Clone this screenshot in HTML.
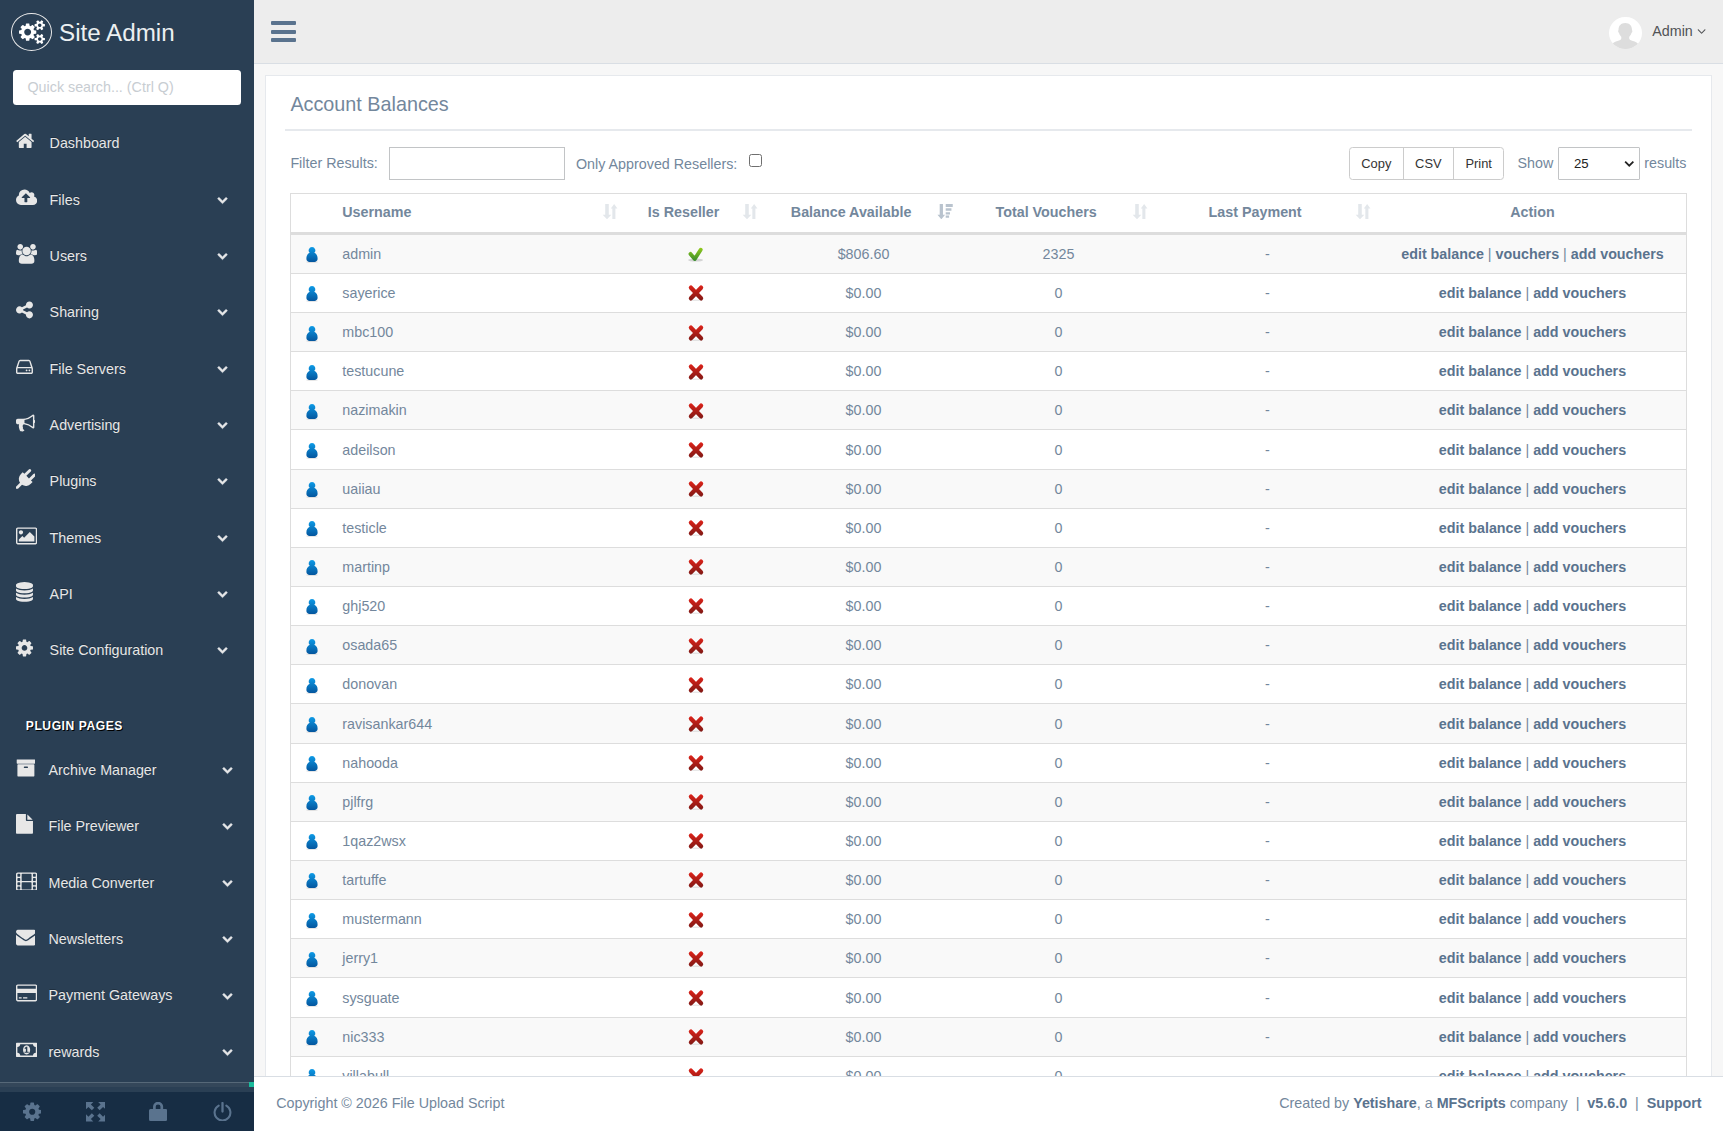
<!DOCTYPE html>
<html lang="en"><head><meta charset="utf-8"><title>Account Balances - Site Admin</title>
<style>
*{box-sizing:border-box}
html,body{margin:0;padding:0}
body{width:1723px;height:1131px;overflow:hidden;position:relative;background:#F7F7F7;color:#73879C;font-family:"Liberation Sans",Arial,Helvetica,sans-serif;font-size:14.3px;line-height:1.471}
a{color:#5A738E;text-decoration:none}
svg{display:block}
#side{position:absolute;left:0;top:0;width:254px;height:1131px;background:#2A3F54;overflow:hidden}
#logo{position:absolute;left:10.9px;top:12.8px;width:41.3px;height:38px;border:1.3px solid #EAEAEA;border-radius:50%}
#logo svg{position:absolute;left:6.7px;top:6.4px;fill:#fff}
#title{position:absolute;left:59px;top:15px;font-size:24.2px;line-height:36px;color:#ECF0F1;white-space:nowrap}
#qs{position:absolute;left:13px;top:70px;width:228px;height:35px;background:#fff;border-radius:3.5px;color:#C8CDD2;font-size:14.3px;line-height:35px;padding-left:14.5px}
.mi{position:absolute;left:0;width:254px;height:56.33px}
.mi svg{position:absolute;fill:#E7E7E7}
.mt{position:absolute;top:15.04px;line-height:20px;color:#E7E7E7;white-space:nowrap;text-shadow:0 -1px 0 rgba(0,0,0,.25)}
#pp{position:absolute;left:25.8px;top:717px;font-size:12.1px;font-weight:bold;letter-spacing:.55px;color:#fff;line-height:18px;text-shadow:1px 1px #000;white-space:nowrap}
#sband{position:absolute;left:0;top:1082px;width:254px;height:5px;background:#34475A;border-top:1px solid #566878}
#teal{position:absolute;left:249px;top:1082px;width:5px;height:5px;background:#1ABB9C}
#sfoot{position:absolute;left:0;top:1092px;width:254px;height:39px;background:#172D44}
#sfoot svg{position:absolute;fill:#5A738E}
#nav{position:absolute;left:254px;top:0;width:1469px;height:64px;background:#EDEDED;border-bottom:1px solid #D9DEE4}
#bars{position:absolute;left:16.6px;top:21px;width:25.2px;height:21px}
#bars i{position:absolute;left:0;width:25px;height:4.1px;border-radius:1px;background:#5A738E}
#av{position:absolute;left:1355px;top:16.7px;width:32.5px;height:32.5px;border-radius:50%;background:#fff;overflow:hidden}
#adm{position:absolute;left:1398.3px;top:21px;line-height:20px;color:#515356;white-space:nowrap}
#panel{position:absolute;left:265px;top:75px;width:1447px;height:1010px;background:#fff;border:1px solid #E6E9ED}
#h2{position:absolute;left:24.4px;top:12.5px;font-size:19.8px;line-height:30px;color:#73879C;white-space:nowrap}
#hr{position:absolute;left:19px;top:53px;width:1407px;height:2px;background:#E6E9ED}
.lbl{position:absolute;line-height:20px;white-space:nowrap}
.inp{position:absolute;background:#fff;border:1px solid #C2C4C6}
#btns{position:absolute;left:1083px;top:71px;height:33px;display:flex;border:1px solid #ccc;border-radius:3.5px;background:#fff;font-size:12.9px;color:#333;line-height:31px}
#btns span{display:block;text-align:center;border-left:1px solid #ccc}
#btns span:first-child{border-left:0}
table{position:absolute;left:24px;top:117px;width:1397px;border-collapse:collapse;border:1px solid #ddd;table-layout:fixed}
th{height:40px;padding:0;font-weight:bold;text-align:center;position:relative;border-bottom:3px solid #ddd;vertical-align:middle;line-height:20px;white-space:nowrap}
th.l{text-align:left;padding-left:8.8px}
th span{display:block;padding-right:24.8px;position:relative;top:-1px}
th.na span{padding-right:0}
.srt{position:absolute;right:8px;top:9.8px;width:15.6px;height:15.3px}
td{height:39.155px;padding:0;text-align:center;border-top:1px solid #ddd;vertical-align:middle;line-height:20px;white-space:nowrap}
td.c1{text-align:left;padding-left:8.8px}
tr.odd td{background:#F9F9F9}
tr.first td{height:39.91px}
td a{font-weight:bold}
.uic{width:18px;height:18px;margin:0 auto;position:relative;left:-.1px;top:.4px}
.xic{width:18px;height:18px;margin:0 auto;position:relative;left:-.45px;top:.4px}
.cic{width:18px;height:18px;margin:0 auto;position:relative;left:-.45px;top:.3px}
#foot{position:absolute;left:254px;top:1076px;width:1469px;height:55px;background:#fff;border-top:1px solid #D9DEE4}
#foot .l{position:absolute;left:22.2px;top:15.5px;line-height:20px;white-space:nowrap}
#foot .r{position:absolute;right:21.5px;top:15.500px;line-height:20px;white-space:nowrap}
#foot b{color:#5A738E}
</style></head><body>
<svg width="0" height="0" style="position:absolute"><defs><linearGradient id="ug" x1="0" y1="0" x2="0" y2="1"><stop offset="0" stop-color="#0D9AE6"/><stop offset="1" stop-color="#04569E"/></linearGradient><linearGradient id="xg" gradientUnits="userSpaceOnUse" x1="0" y1="1.500" x2="0" y2="16.500"><stop offset="0" stop-color="#DC2219"/><stop offset="1" stop-color="#801915"/></linearGradient><linearGradient id="cg" gradientUnits="userSpaceOnUse" x1="0" y1="2.500" x2="0" y2="16"><stop offset="0" stop-color="#96CC1C"/><stop offset="1" stop-color="#358A2C"/></linearGradient></defs></svg>
<div id="side">
<div id="logo"><svg class="fa" viewBox="0 -1536 1920 1792" style="width:25.93px;height:24.20px;"><path transform="scale(1,-1)" d="M896 640q0 106 -75 181t-181 75t-181 -75t-75 -181t75 -181t181 -75t181 75t75 181zM1664 128q0 52 -38 90t-90 38t-90 -38t-38 -90q0 -53 37.5 -90.5t90.5 -37.5t90.5 37.5t37.5 90.5zM1664 1152q0 52 -38 90t-90 38t-90 -38t-38 -90q0 -53 37.5 -90.5t90.5 -37.5
t90.5 37.5t37.5 90.5zM1280 731v-185q0 -10 -7 -19.5t-16 -10.5l-155 -24q-11 -35 -32 -76q34 -48 90 -115q7 -11 7 -20q0 -12 -7 -19q-23 -30 -82.5 -89.5t-78.5 -59.5q-11 0 -21 7l-115 90q-37 -19 -77 -31q-11 -108 -23 -155q-7 -24 -30 -24h-186q-11 0 -20 7.5t-10 17.5
l-23 153q-34 10 -75 31l-118 -89q-7 -7 -20 -7q-11 0 -21 8q-144 133 -144 160q0 9 7 19q10 14 41 53t47 61q-23 44 -35 82l-152 24q-10 1 -17 9.5t-7 19.5v185q0 10 7 19.5t16 10.5l155 24q11 35 32 76q-34 48 -90 115q-7 11 -7 20q0 12 7 20q22 30 82 89t79 59q11 0 21 -7
l115 -90q34 18 77 32q11 108 23 154q7 24 30 24h186q11 0 20 -7.5t10 -17.5l23 -153q34 -10 75 -31l118 89q8 7 20 7q11 0 21 -8q144 -133 144 -160q0 -8 -7 -19q-12 -16 -42 -54t-45 -60q23 -48 34 -82l152 -23q10 -2 17 -10.5t7 -19.5zM1920 198v-140q0 -16 -149 -31
q-12 -27 -30 -52q51 -113 51 -138q0 -4 -4 -7q-122 -71 -124 -71q-8 0 -46 47t-52 68q-20 -2 -30 -2t-30 2q-14 -21 -52 -68t-46 -47q-2 0 -124 71q-4 3 -4 7q0 25 51 138q-18 25 -30 52q-149 15 -149 31v140q0 16 149 31q13 29 30 52q-51 113 -51 138q0 4 4 7q4 2 35 20
t59 34t30 16q8 0 46 -46.5t52 -67.5q20 2 30 2t30 -2q51 71 92 112l6 2q4 0 124 -70q4 -3 4 -7q0 -25 -51 -138q17 -23 30 -52q149 -15 149 -31zM1920 1222v-140q0 -16 -149 -31q-12 -27 -30 -52q51 -113 51 -138q0 -4 -4 -7q-122 -71 -124 -71q-8 0 -46 47t-52 68
q-20 -2 -30 -2t-30 2q-14 -21 -52 -68t-46 -47q-2 0 -124 71q-4 3 -4 7q0 25 51 138q-18 25 -30 52q-149 15 -149 31v140q0 16 149 31q13 29 30 52q-51 113 -51 138q0 4 4 7q4 2 35 20t59 34t30 16q8 0 46 -46.5t52 -67.5q20 2 30 2t30 -2q51 71 92 112l6 2q4 0 124 -70
q4 -3 4 -7q0 -25 -51 -138q17 -23 30 -52q149 -15 149 -31z"/></svg></div>
<div id="title">Site Admin</div>
<div id="qs">Quick search... (Ctrl Q)</div>
<div class="mi" style="top:118.20px"><svg class="fa" viewBox="0 -1536 1664 1792" style="width:18.39px;height:19.80px;left:15.7px;top:13.03px"><path transform="scale(1,-1)" d="M1408 544v-480q0 -26 -19 -45t-45 -19h-384v384h-256v-384h-384q-26 0 -45 19t-19 45v480q0 1 0.5 3t0.5 3l575 474l575 -474q1 -2 1 -6zM1631 613l-62 -74q-8 -9 -21 -11h-3q-13 0 -21 7l-692 577l-692 -577q-12 -8 -24 -7q-13 2 -21 11l-62 74q-8 10 -7 23.5t11 21.5
l719 599q32 26 76 26t76 -26l244 -204v195q0 14 9 23t23 9h192q14 0 23 -9t9 -23v-408l219 -182q10 -8 11 -21.5t-7 -23.5z"/></svg><span class="mt" style="left:49.6px">Dashboard</span></div>
<div class="mi" style="top:174.53px"><svg class="fa" viewBox="0 -1536 1920 1792" style="width:21.21px;height:19.80px;left:15.7px;top:13.03px"><path transform="scale(1,-1)" d="M1280 672q0 14 -9 23l-352 352q-9 9 -23 9t-23 -9l-351 -351q-10 -12 -10 -24q0 -14 9 -23t23 -9h224v-352q0 -13 9.5 -22.5t22.5 -9.5h192q13 0 22.5 9.5t9.5 22.5v352h224q13 0 22.5 9.5t9.5 22.5zM1920 384q0 -159 -112.5 -271.5t-271.5 -112.5h-1088
q-185 0 -316.5 131.5t-131.5 316.5q0 130 70 240t188 165q-2 30 -2 43q0 212 150 362t362 150q156 0 285.5 -87t188.5 -231q71 62 166 62q106 0 181 -75t75 -181q0 -76 -41 -138q130 -31 213.5 -135.5t83.5 -238.5z"/></svg><span class="mt" style="left:49.6px">Files</span><svg class="fa" viewBox="0 -1536 1792 1792" style="width:11.00px;height:11.00px;left:217px;top:19.2px" fill="#C4CFDA" stroke="#C4CFDA" stroke-width="70"><path transform="scale(1,-1)" d="M1683 728l-742 -741q-19 -19 -45 -19t-45 19l-742 741q-19 19 -19 45.5t19 45.5l166 165q19 19 45 19t45 -19l531 -531l531 531q19 19 45 19t45 -19l166 -165q19 -19 19 -45.5t-19 -45.5z"/></svg></div>
<div class="mi" style="top:230.86px"><svg class="fa" viewBox="0 -1536 1920 1792" style="width:21.21px;height:19.80px;left:15.7px;top:13.03px"><path transform="scale(1,-1)" d="M593 640q-162 -5 -265 -128h-134q-82 0 -138 40.5t-56 118.5q0 353 124 353q6 0 43.5 -21t97.5 -42.5t119 -21.5q67 0 133 23q-5 -37 -5 -66q0 -139 81 -256zM1664 3q0 -120 -73 -189.5t-194 -69.5h-874q-121 0 -194 69.5t-73 189.5q0 53 3.5 103.5t14 109t26.5 108.5
t43 97.5t62 81t85.5 53.5t111.5 20q10 0 43 -21.5t73 -48t107 -48t135 -21.5t135 21.5t107 48t73 48t43 21.5q61 0 111.5 -20t85.5 -53.5t62 -81t43 -97.5t26.5 -108.5t14 -109t3.5 -103.5zM640 1280q0 -106 -75 -181t-181 -75t-181 75t-75 181t75 181t181 75t181 -75
t75 -181zM1344 896q0 -159 -112.5 -271.5t-271.5 -112.5t-271.5 112.5t-112.5 271.5t112.5 271.5t271.5 112.5t271.5 -112.5t112.5 -271.5zM1920 671q0 -78 -56 -118.5t-138 -40.5h-134q-103 123 -265 128q81 117 81 256q0 29 -5 66q66 -23 133 -23q59 0 119 21.5t97.5 42.5
t43.5 21q124 0 124 -353zM1792 1280q0 -106 -75 -181t-181 -75t-181 75t-75 181t75 181t181 75t181 -75t75 -181z"/></svg><span class="mt" style="left:49.6px">Users</span><svg class="fa" viewBox="0 -1536 1792 1792" style="width:11.00px;height:11.00px;left:217px;top:19.2px" fill="#C4CFDA" stroke="#C4CFDA" stroke-width="70"><path transform="scale(1,-1)" d="M1683 728l-742 -741q-19 -19 -45 -19t-45 19l-742 741q-19 19 -19 45.5t19 45.5l166 165q19 19 45 19t45 -19l531 -531l531 531q19 19 45 19t45 -19l166 -165q19 -19 19 -45.5t-19 -45.5z"/></svg></div>
<div class="mi" style="top:287.19px"><svg class="fa" viewBox="0 -1536 1536 1792" style="width:16.97px;height:19.80px;left:15.7px;top:13.03px"><path transform="scale(1,-1)" d="M1216 512q133 0 226.5 -93.5t93.5 -226.5t-93.5 -226.5t-226.5 -93.5t-226.5 93.5t-93.5 226.5q0 12 2 34l-360 180q-92 -86 -218 -86q-133 0 -226.5 93.5t-93.5 226.5t93.5 226.5t226.5 93.5q126 0 218 -86l360 180q-2 22 -2 34q0 133 93.5 226.5t226.5 93.5
t226.5 -93.5t93.5 -226.5t-93.5 -226.5t-226.5 -93.5q-126 0 -218 86l-360 -180q2 -22 2 -34t-2 -34l360 -180q92 86 218 86z"/></svg><span class="mt" style="left:49.6px">Sharing</span><svg class="fa" viewBox="0 -1536 1792 1792" style="width:11.00px;height:11.00px;left:217px;top:19.2px" fill="#C4CFDA" stroke="#C4CFDA" stroke-width="70"><path transform="scale(1,-1)" d="M1683 728l-742 -741q-19 -19 -45 -19t-45 19l-742 741q-19 19 -19 45.5t19 45.5l166 165q19 19 45 19t45 -19l531 -531l531 531q19 19 45 19t45 -19l166 -165q19 -19 19 -45.5t-19 -45.5z"/></svg></div>
<div class="mi" style="top:343.52px"><svg class="fa" viewBox="0 -1536 1536 1792" style="width:16.97px;height:19.80px;left:15.7px;top:13.03px"><path transform="scale(1,-1)" d="M1040 320q0 -33 -23.5 -56.5t-56.5 -23.5t-56.5 23.5t-23.5 56.5t23.5 56.5t56.5 23.5t56.5 -23.5t23.5 -56.5zM1296 320q0 -33 -23.5 -56.5t-56.5 -23.5t-56.5 23.5t-23.5 56.5t23.5 56.5t56.5 23.5t56.5 -23.5t23.5 -56.5zM1408 160v320q0 13 -9.5 22.5t-22.5 9.5
h-1216q-13 0 -22.5 -9.5t-9.5 -22.5v-320q0 -13 9.5 -22.5t22.5 -9.5h1216q13 0 22.5 9.5t9.5 22.5zM178 640h1180l-157 482q-4 13 -16 21.5t-26 8.5h-782q-14 0 -26 -8.5t-16 -21.5zM1536 480v-320q0 -66 -47 -113t-113 -47h-1216q-66 0 -113 47t-47 113v320q0 25 16 75
l197 606q17 53 63 86t101 33h782q55 0 101 -33t63 -86l197 -606q16 -50 16 -75z"/></svg><span class="mt" style="left:49.6px">File Servers</span><svg class="fa" viewBox="0 -1536 1792 1792" style="width:11.00px;height:11.00px;left:217px;top:19.2px" fill="#C4CFDA" stroke="#C4CFDA" stroke-width="70"><path transform="scale(1,-1)" d="M1683 728l-742 -741q-19 -19 -45 -19t-45 19l-742 741q-19 19 -19 45.5t19 45.5l166 165q19 19 45 19t45 -19l531 -531l531 531q19 19 45 19t45 -19l166 -165q19 -19 19 -45.5t-19 -45.5z"/></svg></div>
<div class="mi" style="top:399.85px"><svg class="fa" viewBox="0 -1536 1792 1792" style="width:19.80px;height:19.80px;left:15.7px;top:13.03px"><path transform="scale(1,-1)" d="M1664 896q53 0 90.5 -37.5t37.5 -90.5t-37.5 -90.5t-90.5 -37.5v-384q0 -52 -38 -90t-90 -38q-417 347 -812 380q-58 -19 -91 -66t-31 -100.5t40 -92.5q-20 -33 -23 -65.5t6 -58t33.5 -55t48 -50t61.5 -50.5q-29 -58 -111.5 -83t-168.5 -11.5t-132 55.5q-7 23 -29.5 87.5
t-32 94.5t-23 89t-15 101t3.5 98.5t22 110.5h-122q-66 0 -113 47t-47 113v192q0 66 47 113t113 47h480q435 0 896 384q52 0 90 -38t38 -90v-384zM1536 292v954q-394 -302 -768 -343v-270q377 -42 768 -341z"/></svg><span class="mt" style="left:49.6px">Advertising</span><svg class="fa" viewBox="0 -1536 1792 1792" style="width:11.00px;height:11.00px;left:217px;top:19.2px" fill="#C4CFDA" stroke="#C4CFDA" stroke-width="70"><path transform="scale(1,-1)" d="M1683 728l-742 -741q-19 -19 -45 -19t-45 19l-742 741q-19 19 -19 45.5t19 45.5l166 165q19 19 45 19t45 -19l531 -531l531 531q19 19 45 19t45 -19l166 -165q19 -19 19 -45.5t-19 -45.5z"/></svg></div>
<div class="mi" style="top:456.18px"><svg class="fa" viewBox="0 -1536 1792 1792" style="width:19.80px;height:19.80px;left:15.7px;top:13.03px"><path transform="scale(1,-1)" d="M1755 1083q37 -38 37 -90.5t-37 -90.5l-401 -400l150 -150l-160 -160q-163 -163 -389.5 -186.5t-411.5 100.5l-362 -362h-181v181l362 362q-124 185 -100.5 411.5t186.5 389.5l160 160l150 -150l400 401q38 37 91 37t90 -37t37 -90.5t-37 -90.5l-400 -401l234 -234
l401 400q38 37 91 37t90 -37z"/></svg><span class="mt" style="left:49.6px">Plugins</span><svg class="fa" viewBox="0 -1536 1792 1792" style="width:11.00px;height:11.00px;left:217px;top:19.2px" fill="#C4CFDA" stroke="#C4CFDA" stroke-width="70"><path transform="scale(1,-1)" d="M1683 728l-742 -741q-19 -19 -45 -19t-45 19l-742 741q-19 19 -19 45.5t19 45.5l166 165q19 19 45 19t45 -19l531 -531l531 531q19 19 45 19t45 -19l166 -165q19 -19 19 -45.5t-19 -45.5z"/></svg></div>
<div class="mi" style="top:512.51px"><svg class="fa" viewBox="0 -1536 1920 1792" style="width:21.21px;height:19.80px;left:15.7px;top:13.03px"><path transform="scale(1,-1)" d="M640 960q0 -80 -56 -136t-136 -56t-136 56t-56 136t56 136t136 56t136 -56t56 -136zM1664 576v-448h-1408v192l320 320l160 -160l512 512zM1760 1280h-1600q-13 0 -22.5 -9.5t-9.5 -22.5v-1216q0 -13 9.5 -22.5t22.5 -9.5h1600q13 0 22.5 9.5t9.5 22.5v1216
q0 13 -9.5 22.5t-22.5 9.5zM1920 1248v-1216q0 -66 -47 -113t-113 -47h-1600q-66 0 -113 47t-47 113v1216q0 66 47 113t113 47h1600q66 0 113 -47t47 -113z"/></svg><span class="mt" style="left:49.6px">Themes</span><svg class="fa" viewBox="0 -1536 1792 1792" style="width:11.00px;height:11.00px;left:217px;top:19.2px" fill="#C4CFDA" stroke="#C4CFDA" stroke-width="70"><path transform="scale(1,-1)" d="M1683 728l-742 -741q-19 -19 -45 -19t-45 19l-742 741q-19 19 -19 45.5t19 45.5l166 165q19 19 45 19t45 -19l531 -531l531 531q19 19 45 19t45 -19l166 -165q19 -19 19 -45.5t-19 -45.5z"/></svg></div>
<div class="mi" style="top:568.84px"><svg class="fa" viewBox="0 -1536 1536 1792" style="width:16.97px;height:19.80px;left:15.7px;top:13.03px"><path transform="scale(1,-1)" d="M768 768q237 0 443 43t325 127v-170q0 -69 -103 -128t-280 -93.5t-385 -34.5t-385 34.5t-280 93.5t-103 128v170q119 -84 325 -127t443 -43zM768 0q237 0 443 43t325 127v-170q0 -69 -103 -128t-280 -93.5t-385 -34.5t-385 34.5t-280 93.5t-103 128v170q119 -84 325 -127
t443 -43zM768 384q237 0 443 43t325 127v-170q0 -69 -103 -128t-280 -93.5t-385 -34.5t-385 34.5t-280 93.5t-103 128v170q119 -84 325 -127t443 -43zM768 1536q208 0 385 -34.5t280 -93.5t103 -128v-128q0 -69 -103 -128t-280 -93.5t-385 -34.5t-385 34.5t-280 93.5
t-103 128v128q0 69 103 128t280 93.5t385 34.5z"/></svg><span class="mt" style="left:49.6px">API</span><svg class="fa" viewBox="0 -1536 1792 1792" style="width:11.00px;height:11.00px;left:217px;top:19.2px" fill="#C4CFDA" stroke="#C4CFDA" stroke-width="70"><path transform="scale(1,-1)" d="M1683 728l-742 -741q-19 -19 -45 -19t-45 19l-742 741q-19 19 -19 45.5t19 45.5l166 165q19 19 45 19t45 -19l531 -531l531 531q19 19 45 19t45 -19l166 -165q19 -19 19 -45.5t-19 -45.5z"/></svg></div>
<div class="mi" style="top:625.17px"><svg class="fa" viewBox="0 -1536 1536 1792" style="width:16.97px;height:19.80px;left:15.7px;top:13.03px"><path transform="scale(1,-1)" d="M1024 640q0 106 -75 181t-181 75t-181 -75t-75 -181t75 -181t181 -75t181 75t75 181zM1536 749v-222q0 -12 -8 -23t-20 -13l-185 -28q-19 -54 -39 -91q35 -50 107 -138q10 -12 10 -25t-9 -23q-27 -37 -99 -108t-94 -71q-12 0 -26 9l-138 108q-44 -23 -91 -38
q-16 -136 -29 -186q-7 -28 -36 -28h-222q-14 0 -24.5 8.5t-11.5 21.5l-28 184q-49 16 -90 37l-141 -107q-10 -9 -25 -9q-14 0 -25 11q-126 114 -165 168q-7 10 -7 23q0 12 8 23q15 21 51 66.5t54 70.5q-27 50 -41 99l-183 27q-13 2 -21 12.5t-8 23.5v222q0 12 8 23t19 13
l186 28q14 46 39 92q-40 57 -107 138q-10 12 -10 24q0 10 9 23q26 36 98.5 107.5t94.5 71.5q13 0 26 -10l138 -107q44 23 91 38q16 136 29 186q7 28 36 28h222q14 0 24.5 -8.5t11.5 -21.5l28 -184q49 -16 90 -37l142 107q9 9 24 9q13 0 25 -10q129 -119 165 -170q7 -8 7 -22
q0 -12 -8 -23q-15 -21 -51 -66.5t-54 -70.5q26 -50 41 -98l183 -28q13 -2 21 -12.5t8 -23.5z"/></svg><span class="mt" style="left:49.6px">Site Configuration</span><svg class="fa" viewBox="0 -1536 1792 1792" style="width:11.00px;height:11.00px;left:217px;top:19.2px" fill="#C4CFDA" stroke="#C4CFDA" stroke-width="70"><path transform="scale(1,-1)" d="M1683 728l-742 -741q-19 -19 -45 -19t-45 19l-742 741q-19 19 -19 45.5t19 45.5l166 165q19 19 45 19t45 -19l531 -531l531 531q19 19 45 19t45 -19l166 -165q19 -19 19 -45.5t-19 -45.5z"/></svg></div>
<div class="mi" style="top:744.90px"><svg class="fa" viewBox="0 -1536 1792 1792" style="width:19.80px;height:19.80px;left:15.7px;top:13.03px"><path transform="scale(1,-1)" d="M1088 704q0 26 -19 45t-45 19h-256q-26 0 -45 -19t-19 -45t19 -45t45 -19h256q26 0 45 19t19 45zM1664 896v-960q0 -26 -19 -45t-45 -19h-1408q-26 0 -45 19t-19 45v960q0 26 19 45t45 19h1408q26 0 45 -19t19 -45zM1728 1344v-256q0 -26 -19 -45t-45 -19h-1536
q-26 0 -45 19t-19 45v256q0 26 19 45t45 19h1536q26 0 45 -19t19 -45z"/></svg><span class="mt" style="left:48.5px">Archive Manager</span><svg class="fa" viewBox="0 -1536 1792 1792" style="width:11.00px;height:11.00px;left:221.7px;top:19.2px" fill="#C4CFDA" stroke="#C4CFDA" stroke-width="70"><path transform="scale(1,-1)" d="M1683 728l-742 -741q-19 -19 -45 -19t-45 19l-742 741q-19 19 -19 45.5t19 45.5l166 165q19 19 45 19t45 -19l531 -531l531 531q19 19 45 19t45 -19l166 -165q19 -19 19 -45.5t-19 -45.5z"/></svg></div>
<div class="mi" style="top:801.26px"><svg class="fa" viewBox="0 -1536 1536 1792" style="width:16.97px;height:19.80px;left:15.7px;top:13.03px"><path transform="scale(1,-1)" d="M1024 1024v472q22 -14 36 -28l408 -408q14 -14 28 -36h-472zM896 992q0 -40 28 -68t68 -28h544v-1056q0 -40 -28 -68t-68 -28h-1344q-40 0 -68 28t-28 68v1600q0 40 28 68t68 28h800v-544z"/></svg><span class="mt" style="left:48.5px">File Previewer</span><svg class="fa" viewBox="0 -1536 1792 1792" style="width:11.00px;height:11.00px;left:221.7px;top:19.2px" fill="#C4CFDA" stroke="#C4CFDA" stroke-width="70"><path transform="scale(1,-1)" d="M1683 728l-742 -741q-19 -19 -45 -19t-45 19l-742 741q-19 19 -19 45.5t19 45.5l166 165q19 19 45 19t45 -19l531 -531l531 531q19 19 45 19t45 -19l166 -165q19 -19 19 -45.5t-19 -45.5z"/></svg></div>
<div class="mi" style="top:857.62px"><svg class="fa" viewBox="0 -1536 1920 1792" style="width:21.21px;height:19.80px;left:15.7px;top:13.03px"><path transform="scale(1,-1)" d="M384 -64v128q0 26 -19 45t-45 19h-128q-26 0 -45 -19t-19 -45v-128q0 -26 19 -45t45 -19h128q26 0 45 19t19 45zM384 320v128q0 26 -19 45t-45 19h-128q-26 0 -45 -19t-19 -45v-128q0 -26 19 -45t45 -19h128q26 0 45 19t19 45zM384 704v128q0 26 -19 45t-45 19h-128
q-26 0 -45 -19t-19 -45v-128q0 -26 19 -45t45 -19h128q26 0 45 19t19 45zM1408 -64v512q0 26 -19 45t-45 19h-768q-26 0 -45 -19t-19 -45v-512q0 -26 19 -45t45 -19h768q26 0 45 19t19 45zM384 1088v128q0 26 -19 45t-45 19h-128q-26 0 -45 -19t-19 -45v-128q0 -26 19 -45
t45 -19h128q26 0 45 19t19 45zM1792 -64v128q0 26 -19 45t-45 19h-128q-26 0 -45 -19t-19 -45v-128q0 -26 19 -45t45 -19h128q26 0 45 19t19 45zM1408 704v512q0 26 -19 45t-45 19h-768q-26 0 -45 -19t-19 -45v-512q0 -26 19 -45t45 -19h768q26 0 45 19t19 45zM1792 320v128
q0 26 -19 45t-45 19h-128q-26 0 -45 -19t-19 -45v-128q0 -26 19 -45t45 -19h128q26 0 45 19t19 45zM1792 704v128q0 26 -19 45t-45 19h-128q-26 0 -45 -19t-19 -45v-128q0 -26 19 -45t45 -19h128q26 0 45 19t19 45zM1792 1088v128q0 26 -19 45t-45 19h-128q-26 0 -45 -19
t-19 -45v-128q0 -26 19 -45t45 -19h128q26 0 45 19t19 45zM1920 1248v-1344q0 -66 -47 -113t-113 -47h-1600q-66 0 -113 47t-47 113v1344q0 66 47 113t113 47h1600q66 0 113 -47t47 -113z"/></svg><span class="mt" style="left:48.5px">Media Converter</span><svg class="fa" viewBox="0 -1536 1792 1792" style="width:11.00px;height:11.00px;left:221.7px;top:19.2px" fill="#C4CFDA" stroke="#C4CFDA" stroke-width="70"><path transform="scale(1,-1)" d="M1683 728l-742 -741q-19 -19 -45 -19t-45 19l-742 741q-19 19 -19 45.5t19 45.5l166 165q19 19 45 19t45 -19l531 -531l531 531q19 19 45 19t45 -19l166 -165q19 -19 19 -45.5t-19 -45.5z"/></svg></div>
<div class="mi" style="top:913.98px"><svg class="fa" viewBox="0 -1536 1792 1792" style="width:19.80px;height:19.80px;left:15.7px;top:13.03px"><path transform="scale(1,-1)" d="M1792 826v-794q0 -66 -47 -113t-113 -47h-1472q-66 0 -113 47t-47 113v794q44 -49 101 -87q362 -246 497 -345q57 -42 92.5 -65.5t94.5 -48t110 -24.5h1h1q51 0 110 24.5t94.5 48t92.5 65.5q170 123 498 345q57 39 100 87zM1792 1120q0 -79 -49 -151t-122 -123
q-376 -261 -468 -325q-10 -7 -42.5 -30.5t-54 -38t-52 -32.5t-57.5 -27t-50 -9h-1h-1q-23 0 -50 9t-57.5 27t-52 32.5t-54 38t-42.5 30.5q-91 64 -262 182.5t-205 142.5q-62 42 -117 115.5t-55 136.5q0 78 41.5 130t118.5 52h1472q65 0 112.5 -47t47.5 -113z"/></svg><span class="mt" style="left:48.5px">Newsletters</span><svg class="fa" viewBox="0 -1536 1792 1792" style="width:11.00px;height:11.00px;left:221.7px;top:19.2px" fill="#C4CFDA" stroke="#C4CFDA" stroke-width="70"><path transform="scale(1,-1)" d="M1683 728l-742 -741q-19 -19 -45 -19t-45 19l-742 741q-19 19 -19 45.5t19 45.5l166 165q19 19 45 19t45 -19l531 -531l531 531q19 19 45 19t45 -19l166 -165q19 -19 19 -45.5t-19 -45.5z"/></svg></div>
<div class="mi" style="top:970.34px"><svg class="fa" viewBox="0 -1536 1920 1792" style="width:21.21px;height:19.80px;left:15.7px;top:13.03px"><path transform="scale(1,-1)" d="M1760 1408q66 0 113 -47t47 -113v-1216q0 -66 -47 -113t-113 -47h-1600q-66 0 -113 47t-47 113v1216q0 66 47 113t113 47h1600zM160 1280q-13 0 -22.5 -9.5t-9.5 -22.5v-224h1664v224q0 13 -9.5 22.5t-22.5 9.5h-1600zM1760 0q13 0 22.5 9.5t9.5 22.5v608h-1664v-608
q0 -13 9.5 -22.5t22.5 -9.5h1600zM256 128v128h256v-128h-256zM640 128v128h384v-128h-384z"/></svg><span class="mt" style="left:48.5px">Payment Gateways</span><svg class="fa" viewBox="0 -1536 1792 1792" style="width:11.00px;height:11.00px;left:221.7px;top:19.2px" fill="#C4CFDA" stroke="#C4CFDA" stroke-width="70"><path transform="scale(1,-1)" d="M1683 728l-742 -741q-19 -19 -45 -19t-45 19l-742 741q-19 19 -19 45.5t19 45.5l166 165q19 19 45 19t45 -19l531 -531l531 531q19 19 45 19t45 -19l166 -165q19 -19 19 -45.5t-19 -45.5z"/></svg></div>
<div class="mi" style="top:1026.70px"><svg class="fa" viewBox="0 -1536 1920 1792" style="width:21.21px;height:19.80px;left:15.7px;top:13.03px"><path transform="scale(1,-1)" d="M768 384h384v96h-128v448h-114l-148 -137l77 -80q42 37 55 57h2v-288h-128v-96zM1280 640q0 -70 -21 -142t-59.5 -134t-101.5 -101t-138 -39t-138 39t-101.5 101t-59.5 134t-21 142t21 142t59.5 134t101.5 101t138 39t138 -39t101.5 -101t59.5 -134t21 -142zM1792 384
v512q-106 0 -181 75t-75 181h-1152q0 -106 -75 -181t-181 -75v-512q106 0 181 -75t75 -181h1152q0 106 75 181t181 75zM1920 1216v-1152q0 -26 -19 -45t-45 -19h-1792q-26 0 -45 19t-19 45v1152q0 26 19 45t45 19h1792q26 0 45 -19t19 -45z"/></svg><span class="mt" style="left:48.5px">rewards</span><svg class="fa" viewBox="0 -1536 1792 1792" style="width:11.00px;height:11.00px;left:221.7px;top:19.2px" fill="#C4CFDA" stroke="#C4CFDA" stroke-width="70"><path transform="scale(1,-1)" d="M1683 728l-742 -741q-19 -19 -45 -19t-45 19l-742 741q-19 19 -19 45.5t19 45.5l166 165q19 19 45 19t45 -19l531 -531l531 531q19 19 45 19t45 -19l166 -165q19 -19 19 -45.5t-19 -45.5z"/></svg></div>
<div id="pp">PLUGIN PAGES</div>
<div id="sband"></div><div id="teal"></div>
<div id="sfoot"><svg class="fa" viewBox="0 -1536 1536 1792" style="width:18.43px;height:21.50px;left:22.6px;top:9.2px"><path transform="scale(1,-1)" d="M1024 640q0 106 -75 181t-181 75t-181 -75t-75 -181t75 -181t181 -75t181 75t75 181zM1536 749v-222q0 -12 -8 -23t-20 -13l-185 -28q-19 -54 -39 -91q35 -50 107 -138q10 -12 10 -25t-9 -23q-27 -37 -99 -108t-94 -71q-12 0 -26 9l-138 108q-44 -23 -91 -38
q-16 -136 -29 -186q-7 -28 -36 -28h-222q-14 0 -24.5 8.5t-11.5 21.5l-28 184q-49 16 -90 37l-141 -107q-10 -9 -25 -9q-14 0 -25 11q-126 114 -165 168q-7 10 -7 23q0 12 8 23q15 21 51 66.5t54 70.5q-27 50 -41 99l-183 27q-13 2 -21 12.5t-8 23.5v222q0 12 8 23t19 13
l186 28q14 46 39 92q-40 57 -107 138q-10 12 -10 24q0 10 9 23q26 36 98.5 107.5t94.5 71.5q13 0 26 -10l138 -107q44 23 91 38q16 136 29 186q7 28 36 28h222q14 0 24.5 -8.5t11.5 -21.5l28 -184q49 -16 90 -37l142 107q9 9 24 9q13 0 25 -10q129 -119 165 -170q7 -8 7 -22
q0 -12 -8 -23q-15 -21 -51 -66.5t-54 -70.5q26 -50 41 -98l183 -28q13 -2 21 -12.5t8 -23.5z"/></svg><svg viewBox="0 0 20 20" style="left:85.7px;top:10.1px;width:19.5px;height:19.5px"><path d="M0 0h7.500L5 2.500 8.500 6 6 8.500 2.500 5 0 7.500zM20 0v7.500L17.500 5 14 8.500 11.500 6 15 2.500 12.500 0zM0 20v-7.500L2.500 15 6 11.500 8.500 14 5 17.500 7.500 20zM20 20h-7.500l2.500-2.500L11.500 14 14 11.500 17.500 15 20 12.500z"/></svg><svg viewBox="0 0 18.200 19" style="left:149.100px;top:10.100px;width:18.200px;height:19px"><path d="M1.500 6.900h15.200a1.500 1.500 0 0 1 1.500 1.500v9.100a1.500 1.500 0 0 1-1.500 1.500H1.500A1.500 1.500 0 0 1 0 17.500V8.400a1.500 1.500 0 0 1 1.500-1.500z"/><path d="M5.400 7.500V4.600a3.700 3.500 0 0 1 7.400 0v2.900" fill="none" stroke="#5A738E" stroke-width="2.700"/></svg><svg viewBox="0 0 19 19" style="left:213px;top:10.300px;width:19px;height:19px"><path d="M5.700 3.700A7.900 7.900 0 1 0 13.300 3.700" fill="none" stroke="#5A738E" stroke-width="2.100" stroke-linecap="round"/><path d="M9.500 1.100v8.400" fill="none" stroke="#5A738E" stroke-width="2.300" stroke-linecap="round"/></svg></div>
</div>
<div id="nav">
<div id="bars"><i style="top:0"></i><i style="top:8.700px"></i><i style="top:16.900px"></i></div>
<div id="av"><svg viewBox="0 0 32 32" width="32.5" height="32.5"><path fill="#DDD" d="M16 5.800c4.200 0 6.600 2.800 6.600 6.400 0 .8.400 1 .4 1.800 0 1-.8 1.300-1 2.100-.4 1.600-1.400 2.800-2.100 3.400v1.700c0 1.200 1.600 1.800 3.700 2.500 2.300.8 4.300 1.500 5 2.900-2.600 3.400-7.300 5.400-12.600 5.400s-10-2-12.600-5.400c.7-1.400 2.700-2.100 5-2.900 2.100-.7 3.700-1.300 3.700-2.500v-1.700c-.7-.6-1.700-1.800-2.100-3.400-.2-.8-1-1.100-1-2.100 0-.8.400-1 .4-1.800 0-3.600 2.400-6.400 6.600-6.400z"/></svg></div>
<div id="adm">Admin</div>
<svg class="fa" viewBox="0 -1536 1152 1792" style="width:9.19px;height:14.30px;position:absolute;left:1442.800px;top:23.500px" fill="#515356"><path transform="scale(1,-1)" d="M1075 800q0 -13 -10 -23l-466 -466q-10 -10 -23 -10t-23 10l-466 466q-10 10 -10 23t10 23l50 50q10 10 23 10t23 -10l393 -393l393 393q10 10 23 10t23 -10l50 -50q10 -10 10 -23z"/></svg>
</div>
<div id="panel">
<div id="h2">Account Balances</div>
<div id="hr"></div>
<div class="lbl" style="left:24.400px;top:76.500px">Filter Results:</div>
<div class="inp" style="left:123px;top:71px;width:176px;height:33px"></div>
<div class="lbl" style="left:310px;top:77.500px">Only Approved Resellers:</div>
<div class="inp" style="left:483px;top:78px;width:13px;height:13px;border:1.3px solid #6F6F6F;border-radius:2.5px"></div>
<div id="btns"><span style="width:52.700px">Copy</span><span style="width:50.300px">CSV</span><span style="width:50.300px">Print</span></div>
<div class="lbl" style="left:1251.500px;top:76.500px">Show</div>
<div class="inp" style="left:1292px;top:71px;width:82px;height:33px;border-radius:1px;color:#222;font-size:13.2px;line-height:31px;padding-left:15px">25<svg viewBox="0 0 12 8" style="position:absolute;right:5px;top:12px;width:10.500px;height:7.500px"><path d="M1.300 1.500L6 6.200l4.700-4.700" fill="none" stroke="#222" stroke-width="2"/></svg></div>
<div class="lbl" style="left:1378.300px;top:76.500px">results</div>
<table><colgroup><col style="width:43px"><col style="width:292.5px"><col style="width:140px"><col style="width:195px"><col style="width:195px"><col style="width:223px"><col></colgroup>
<thead><tr><th></th><th class="l"><span>Username</span><svg class="srt" viewBox="0 0 15 15"><path fill="#E3E7EB" d="M3 0h3.500v10.500H9L4.750 15 .5 10.500H3zM8.500 4.500L11.750 0 15 4.500h-2V15H10V4.500z"/></svg></th><th><span>Is Reseller</span><svg class="srt" viewBox="0 0 15 15"><path fill="#E3E7EB" d="M3 0h3.500v10.500H9L4.750 15 .5 10.500H3zM8.500 4.500L11.750 0 15 4.500h-2V15H10V4.500z"/></svg></th><th><span>Balance Available</span><svg class="srt" viewBox="0 0 15 15" style="width:16px"><path fill="#B9C3CE" d="M2.300 0h3.200v10.500h2.100L3.900 15 .1 10.500h2.200zM8.200 0h6.900v2.900H8.200zM8.200 4.100h5.600v2.600H8.200zM8.200 8h4.200v2.300H8.200zM8.200 11.300h3.300v2.300H8.200z"/></svg></th><th><span>Total Vouchers</span><svg class="srt" viewBox="0 0 15 15"><path fill="#E3E7EB" d="M3 0h3.500v10.500H9L4.750 15 .5 10.500H3zM8.500 4.500L11.750 0 15 4.500h-2V15H10V4.500z"/></svg></th><th><span>Last Payment</span><svg class="srt" viewBox="0 0 15 15"><path fill="#E3E7EB" d="M3 0h3.500v10.500H9L4.750 15 .5 10.500H3zM8.500 4.500L11.750 0 15 4.500h-2V15H10V4.500z"/></svg></th><th class="na"><span>Action</span></th></tr></thead>
<tbody>
<tr class="odd first"><td class="c0"><svg class="uic" viewBox="0 0 18 18"><ellipse cx="9" cy="17.100" rx="6.300" ry="0.900" fill="#000" opacity=".10"/><path fill="url(#ug)" d="M9 2.050a3.350 3.350 0 0 1 2.300 5.790C13.500 8.700 14.600 11 14.600 13.400c0 2.600-1.500 3.600-5.600 3.600S3.400 16 3.400 13.400c0-2.400 1.100-4.700 3.300-5.560A3.350 3.350 0 0 1 9 2.050z"/></svg></td><td class="c1">admin</td><td><svg class="cic" viewBox="0 0 18 18"><ellipse cx="8.600" cy="15.100" rx="7.600" ry="1.500" fill="#000" opacity=".15"/><path d="M3.500 8.900l4.250 5.100L13.700 4.700" stroke="url(#cg)" stroke-width="3.900" stroke-linecap="round" stroke-linejoin="round" fill="none"/></svg></td><td>$806.60</td><td>2325</td><td>-</td><td><a>edit balance</a> | <a>vouchers</a> | <a>add vouchers</a></td></tr>
<tr class="even"><td class="c0"><svg class="uic" viewBox="0 0 18 18"><ellipse cx="9" cy="17.100" rx="6.300" ry="0.900" fill="#000" opacity=".10"/><path fill="url(#ug)" d="M9 2.050a3.350 3.350 0 0 1 2.300 5.790C13.500 8.700 14.600 11 14.600 13.400c0 2.600-1.500 3.600-5.600 3.600S3.400 16 3.400 13.400c0-2.400 1.100-4.700 3.300-5.560A3.350 3.350 0 0 1 9 2.050z"/></svg></td><td class="c1">sayerice</td><td><svg class="xic" viewBox="0 0 18 18"><ellipse cx="9" cy="16.2" rx="6.500" ry="0.800" fill="#000" opacity=".09"/><path d="M3.950 3.650l10.100 10.700M14.050 3.650l-10.100 10.700" stroke="url(#xg)" stroke-width="4.300" stroke-linecap="round" fill="none"/></svg></td><td>$0.00</td><td>0</td><td>-</td><td><a>edit balance</a> | <a>add vouchers</a></td></tr>
<tr class="odd"><td class="c0"><svg class="uic" viewBox="0 0 18 18"><ellipse cx="9" cy="17.100" rx="6.300" ry="0.900" fill="#000" opacity=".10"/><path fill="url(#ug)" d="M9 2.050a3.350 3.350 0 0 1 2.300 5.790C13.500 8.700 14.600 11 14.600 13.400c0 2.600-1.500 3.600-5.600 3.600S3.400 16 3.400 13.400c0-2.400 1.100-4.700 3.300-5.560A3.350 3.350 0 0 1 9 2.050z"/></svg></td><td class="c1">mbc100</td><td><svg class="xic" viewBox="0 0 18 18"><ellipse cx="9" cy="16.2" rx="6.500" ry="0.800" fill="#000" opacity=".09"/><path d="M3.950 3.650l10.100 10.700M14.050 3.650l-10.100 10.700" stroke="url(#xg)" stroke-width="4.300" stroke-linecap="round" fill="none"/></svg></td><td>$0.00</td><td>0</td><td>-</td><td><a>edit balance</a> | <a>add vouchers</a></td></tr>
<tr class="even"><td class="c0"><svg class="uic" viewBox="0 0 18 18"><ellipse cx="9" cy="17.100" rx="6.300" ry="0.900" fill="#000" opacity=".10"/><path fill="url(#ug)" d="M9 2.050a3.350 3.350 0 0 1 2.300 5.790C13.500 8.700 14.600 11 14.600 13.400c0 2.600-1.500 3.600-5.600 3.600S3.400 16 3.400 13.400c0-2.400 1.100-4.700 3.300-5.560A3.350 3.350 0 0 1 9 2.050z"/></svg></td><td class="c1">testucune</td><td><svg class="xic" viewBox="0 0 18 18"><ellipse cx="9" cy="16.2" rx="6.500" ry="0.800" fill="#000" opacity=".09"/><path d="M3.950 3.650l10.100 10.700M14.050 3.650l-10.100 10.700" stroke="url(#xg)" stroke-width="4.300" stroke-linecap="round" fill="none"/></svg></td><td>$0.00</td><td>0</td><td>-</td><td><a>edit balance</a> | <a>add vouchers</a></td></tr>
<tr class="odd"><td class="c0"><svg class="uic" viewBox="0 0 18 18"><ellipse cx="9" cy="17.100" rx="6.300" ry="0.900" fill="#000" opacity=".10"/><path fill="url(#ug)" d="M9 2.050a3.350 3.350 0 0 1 2.300 5.790C13.500 8.700 14.600 11 14.600 13.400c0 2.600-1.500 3.600-5.600 3.600S3.400 16 3.400 13.400c0-2.400 1.100-4.700 3.300-5.560A3.350 3.350 0 0 1 9 2.050z"/></svg></td><td class="c1">nazimakin</td><td><svg class="xic" viewBox="0 0 18 18"><ellipse cx="9" cy="16.2" rx="6.500" ry="0.800" fill="#000" opacity=".09"/><path d="M3.950 3.650l10.100 10.700M14.050 3.650l-10.100 10.700" stroke="url(#xg)" stroke-width="4.300" stroke-linecap="round" fill="none"/></svg></td><td>$0.00</td><td>0</td><td>-</td><td><a>edit balance</a> | <a>add vouchers</a></td></tr>
<tr class="even"><td class="c0"><svg class="uic" viewBox="0 0 18 18"><ellipse cx="9" cy="17.100" rx="6.300" ry="0.900" fill="#000" opacity=".10"/><path fill="url(#ug)" d="M9 2.050a3.350 3.350 0 0 1 2.300 5.790C13.500 8.700 14.600 11 14.600 13.400c0 2.600-1.500 3.600-5.600 3.600S3.400 16 3.400 13.400c0-2.400 1.100-4.700 3.300-5.560A3.350 3.350 0 0 1 9 2.050z"/></svg></td><td class="c1">adeilson</td><td><svg class="xic" viewBox="0 0 18 18"><ellipse cx="9" cy="16.2" rx="6.500" ry="0.800" fill="#000" opacity=".09"/><path d="M3.950 3.650l10.100 10.700M14.050 3.650l-10.100 10.700" stroke="url(#xg)" stroke-width="4.300" stroke-linecap="round" fill="none"/></svg></td><td>$0.00</td><td>0</td><td>-</td><td><a>edit balance</a> | <a>add vouchers</a></td></tr>
<tr class="odd"><td class="c0"><svg class="uic" viewBox="0 0 18 18"><ellipse cx="9" cy="17.100" rx="6.300" ry="0.900" fill="#000" opacity=".10"/><path fill="url(#ug)" d="M9 2.050a3.350 3.350 0 0 1 2.300 5.790C13.500 8.700 14.600 11 14.600 13.400c0 2.600-1.500 3.600-5.600 3.600S3.400 16 3.400 13.400c0-2.400 1.100-4.700 3.300-5.560A3.350 3.350 0 0 1 9 2.050z"/></svg></td><td class="c1">uaiiau</td><td><svg class="xic" viewBox="0 0 18 18"><ellipse cx="9" cy="16.2" rx="6.500" ry="0.800" fill="#000" opacity=".09"/><path d="M3.950 3.650l10.100 10.700M14.050 3.650l-10.100 10.700" stroke="url(#xg)" stroke-width="4.300" stroke-linecap="round" fill="none"/></svg></td><td>$0.00</td><td>0</td><td>-</td><td><a>edit balance</a> | <a>add vouchers</a></td></tr>
<tr class="even"><td class="c0"><svg class="uic" viewBox="0 0 18 18"><ellipse cx="9" cy="17.100" rx="6.300" ry="0.900" fill="#000" opacity=".10"/><path fill="url(#ug)" d="M9 2.050a3.350 3.350 0 0 1 2.300 5.790C13.500 8.700 14.600 11 14.600 13.400c0 2.600-1.500 3.600-5.600 3.600S3.400 16 3.400 13.400c0-2.400 1.100-4.700 3.300-5.560A3.350 3.350 0 0 1 9 2.050z"/></svg></td><td class="c1">testicle</td><td><svg class="xic" viewBox="0 0 18 18"><ellipse cx="9" cy="16.2" rx="6.500" ry="0.800" fill="#000" opacity=".09"/><path d="M3.950 3.650l10.100 10.700M14.050 3.650l-10.100 10.700" stroke="url(#xg)" stroke-width="4.300" stroke-linecap="round" fill="none"/></svg></td><td>$0.00</td><td>0</td><td>-</td><td><a>edit balance</a> | <a>add vouchers</a></td></tr>
<tr class="odd"><td class="c0"><svg class="uic" viewBox="0 0 18 18"><ellipse cx="9" cy="17.100" rx="6.300" ry="0.900" fill="#000" opacity=".10"/><path fill="url(#ug)" d="M9 2.050a3.350 3.350 0 0 1 2.300 5.790C13.500 8.700 14.600 11 14.600 13.400c0 2.600-1.500 3.600-5.600 3.600S3.400 16 3.400 13.400c0-2.400 1.100-4.700 3.300-5.560A3.350 3.350 0 0 1 9 2.050z"/></svg></td><td class="c1">martinp</td><td><svg class="xic" viewBox="0 0 18 18"><ellipse cx="9" cy="16.2" rx="6.500" ry="0.800" fill="#000" opacity=".09"/><path d="M3.950 3.650l10.100 10.700M14.050 3.650l-10.100 10.700" stroke="url(#xg)" stroke-width="4.300" stroke-linecap="round" fill="none"/></svg></td><td>$0.00</td><td>0</td><td>-</td><td><a>edit balance</a> | <a>add vouchers</a></td></tr>
<tr class="even"><td class="c0"><svg class="uic" viewBox="0 0 18 18"><ellipse cx="9" cy="17.100" rx="6.300" ry="0.900" fill="#000" opacity=".10"/><path fill="url(#ug)" d="M9 2.050a3.350 3.350 0 0 1 2.300 5.790C13.500 8.700 14.600 11 14.600 13.400c0 2.600-1.500 3.600-5.600 3.600S3.400 16 3.400 13.400c0-2.400 1.100-4.700 3.300-5.560A3.350 3.350 0 0 1 9 2.050z"/></svg></td><td class="c1">ghj520</td><td><svg class="xic" viewBox="0 0 18 18"><ellipse cx="9" cy="16.2" rx="6.500" ry="0.800" fill="#000" opacity=".09"/><path d="M3.950 3.650l10.100 10.700M14.050 3.650l-10.100 10.700" stroke="url(#xg)" stroke-width="4.300" stroke-linecap="round" fill="none"/></svg></td><td>$0.00</td><td>0</td><td>-</td><td><a>edit balance</a> | <a>add vouchers</a></td></tr>
<tr class="odd"><td class="c0"><svg class="uic" viewBox="0 0 18 18"><ellipse cx="9" cy="17.100" rx="6.300" ry="0.900" fill="#000" opacity=".10"/><path fill="url(#ug)" d="M9 2.050a3.350 3.350 0 0 1 2.300 5.790C13.500 8.700 14.600 11 14.600 13.400c0 2.600-1.500 3.600-5.600 3.600S3.400 16 3.400 13.400c0-2.400 1.100-4.700 3.300-5.560A3.350 3.350 0 0 1 9 2.050z"/></svg></td><td class="c1">osada65</td><td><svg class="xic" viewBox="0 0 18 18"><ellipse cx="9" cy="16.2" rx="6.500" ry="0.800" fill="#000" opacity=".09"/><path d="M3.950 3.650l10.100 10.700M14.050 3.650l-10.100 10.700" stroke="url(#xg)" stroke-width="4.300" stroke-linecap="round" fill="none"/></svg></td><td>$0.00</td><td>0</td><td>-</td><td><a>edit balance</a> | <a>add vouchers</a></td></tr>
<tr class="even"><td class="c0"><svg class="uic" viewBox="0 0 18 18"><ellipse cx="9" cy="17.100" rx="6.300" ry="0.900" fill="#000" opacity=".10"/><path fill="url(#ug)" d="M9 2.050a3.350 3.350 0 0 1 2.300 5.790C13.500 8.700 14.600 11 14.600 13.400c0 2.600-1.500 3.600-5.600 3.600S3.400 16 3.400 13.400c0-2.400 1.100-4.700 3.300-5.560A3.350 3.350 0 0 1 9 2.050z"/></svg></td><td class="c1">donovan</td><td><svg class="xic" viewBox="0 0 18 18"><ellipse cx="9" cy="16.2" rx="6.500" ry="0.800" fill="#000" opacity=".09"/><path d="M3.950 3.650l10.100 10.700M14.050 3.650l-10.100 10.700" stroke="url(#xg)" stroke-width="4.300" stroke-linecap="round" fill="none"/></svg></td><td>$0.00</td><td>0</td><td>-</td><td><a>edit balance</a> | <a>add vouchers</a></td></tr>
<tr class="odd"><td class="c0"><svg class="uic" viewBox="0 0 18 18"><ellipse cx="9" cy="17.100" rx="6.300" ry="0.900" fill="#000" opacity=".10"/><path fill="url(#ug)" d="M9 2.050a3.350 3.350 0 0 1 2.300 5.790C13.500 8.700 14.600 11 14.600 13.400c0 2.600-1.500 3.600-5.600 3.600S3.400 16 3.400 13.400c0-2.400 1.100-4.700 3.300-5.560A3.350 3.350 0 0 1 9 2.050z"/></svg></td><td class="c1">ravisankar644</td><td><svg class="xic" viewBox="0 0 18 18"><ellipse cx="9" cy="16.2" rx="6.500" ry="0.800" fill="#000" opacity=".09"/><path d="M3.950 3.650l10.100 10.700M14.050 3.650l-10.100 10.700" stroke="url(#xg)" stroke-width="4.300" stroke-linecap="round" fill="none"/></svg></td><td>$0.00</td><td>0</td><td>-</td><td><a>edit balance</a> | <a>add vouchers</a></td></tr>
<tr class="even"><td class="c0"><svg class="uic" viewBox="0 0 18 18"><ellipse cx="9" cy="17.100" rx="6.300" ry="0.900" fill="#000" opacity=".10"/><path fill="url(#ug)" d="M9 2.050a3.350 3.350 0 0 1 2.300 5.790C13.500 8.700 14.600 11 14.600 13.400c0 2.600-1.500 3.600-5.600 3.600S3.400 16 3.400 13.400c0-2.400 1.100-4.700 3.300-5.560A3.350 3.350 0 0 1 9 2.050z"/></svg></td><td class="c1">nahooda</td><td><svg class="xic" viewBox="0 0 18 18"><ellipse cx="9" cy="16.2" rx="6.500" ry="0.800" fill="#000" opacity=".09"/><path d="M3.950 3.650l10.100 10.700M14.050 3.650l-10.100 10.700" stroke="url(#xg)" stroke-width="4.300" stroke-linecap="round" fill="none"/></svg></td><td>$0.00</td><td>0</td><td>-</td><td><a>edit balance</a> | <a>add vouchers</a></td></tr>
<tr class="odd"><td class="c0"><svg class="uic" viewBox="0 0 18 18"><ellipse cx="9" cy="17.100" rx="6.300" ry="0.900" fill="#000" opacity=".10"/><path fill="url(#ug)" d="M9 2.050a3.350 3.350 0 0 1 2.300 5.790C13.500 8.700 14.600 11 14.600 13.400c0 2.600-1.500 3.600-5.600 3.600S3.400 16 3.400 13.400c0-2.400 1.100-4.700 3.300-5.560A3.350 3.350 0 0 1 9 2.050z"/></svg></td><td class="c1">pjlfrg</td><td><svg class="xic" viewBox="0 0 18 18"><ellipse cx="9" cy="16.2" rx="6.500" ry="0.800" fill="#000" opacity=".09"/><path d="M3.950 3.650l10.100 10.700M14.050 3.650l-10.100 10.700" stroke="url(#xg)" stroke-width="4.300" stroke-linecap="round" fill="none"/></svg></td><td>$0.00</td><td>0</td><td>-</td><td><a>edit balance</a> | <a>add vouchers</a></td></tr>
<tr class="even"><td class="c0"><svg class="uic" viewBox="0 0 18 18"><ellipse cx="9" cy="17.100" rx="6.300" ry="0.900" fill="#000" opacity=".10"/><path fill="url(#ug)" d="M9 2.050a3.350 3.350 0 0 1 2.300 5.790C13.500 8.700 14.600 11 14.600 13.400c0 2.600-1.500 3.600-5.600 3.600S3.400 16 3.400 13.400c0-2.400 1.100-4.700 3.300-5.560A3.350 3.350 0 0 1 9 2.050z"/></svg></td><td class="c1">1qaz2wsx</td><td><svg class="xic" viewBox="0 0 18 18"><ellipse cx="9" cy="16.2" rx="6.500" ry="0.800" fill="#000" opacity=".09"/><path d="M3.950 3.650l10.100 10.700M14.050 3.650l-10.100 10.700" stroke="url(#xg)" stroke-width="4.300" stroke-linecap="round" fill="none"/></svg></td><td>$0.00</td><td>0</td><td>-</td><td><a>edit balance</a> | <a>add vouchers</a></td></tr>
<tr class="odd"><td class="c0"><svg class="uic" viewBox="0 0 18 18"><ellipse cx="9" cy="17.100" rx="6.300" ry="0.900" fill="#000" opacity=".10"/><path fill="url(#ug)" d="M9 2.050a3.350 3.350 0 0 1 2.300 5.790C13.500 8.700 14.600 11 14.600 13.400c0 2.600-1.500 3.600-5.600 3.600S3.400 16 3.400 13.400c0-2.400 1.100-4.700 3.300-5.560A3.350 3.350 0 0 1 9 2.050z"/></svg></td><td class="c1">tartuffe</td><td><svg class="xic" viewBox="0 0 18 18"><ellipse cx="9" cy="16.2" rx="6.500" ry="0.800" fill="#000" opacity=".09"/><path d="M3.950 3.650l10.100 10.700M14.050 3.650l-10.100 10.700" stroke="url(#xg)" stroke-width="4.300" stroke-linecap="round" fill="none"/></svg></td><td>$0.00</td><td>0</td><td>-</td><td><a>edit balance</a> | <a>add vouchers</a></td></tr>
<tr class="even"><td class="c0"><svg class="uic" viewBox="0 0 18 18"><ellipse cx="9" cy="17.100" rx="6.300" ry="0.900" fill="#000" opacity=".10"/><path fill="url(#ug)" d="M9 2.050a3.350 3.350 0 0 1 2.300 5.790C13.500 8.700 14.600 11 14.600 13.400c0 2.600-1.500 3.600-5.600 3.600S3.400 16 3.400 13.400c0-2.400 1.100-4.700 3.300-5.560A3.350 3.350 0 0 1 9 2.050z"/></svg></td><td class="c1">mustermann</td><td><svg class="xic" viewBox="0 0 18 18"><ellipse cx="9" cy="16.2" rx="6.500" ry="0.800" fill="#000" opacity=".09"/><path d="M3.950 3.650l10.100 10.700M14.050 3.650l-10.100 10.700" stroke="url(#xg)" stroke-width="4.300" stroke-linecap="round" fill="none"/></svg></td><td>$0.00</td><td>0</td><td>-</td><td><a>edit balance</a> | <a>add vouchers</a></td></tr>
<tr class="odd"><td class="c0"><svg class="uic" viewBox="0 0 18 18"><ellipse cx="9" cy="17.100" rx="6.300" ry="0.900" fill="#000" opacity=".10"/><path fill="url(#ug)" d="M9 2.050a3.350 3.350 0 0 1 2.300 5.790C13.500 8.700 14.600 11 14.600 13.400c0 2.600-1.500 3.600-5.600 3.600S3.400 16 3.400 13.400c0-2.400 1.100-4.700 3.300-5.560A3.350 3.350 0 0 1 9 2.050z"/></svg></td><td class="c1">jerry1</td><td><svg class="xic" viewBox="0 0 18 18"><ellipse cx="9" cy="16.2" rx="6.500" ry="0.800" fill="#000" opacity=".09"/><path d="M3.950 3.650l10.100 10.700M14.050 3.650l-10.100 10.700" stroke="url(#xg)" stroke-width="4.300" stroke-linecap="round" fill="none"/></svg></td><td>$0.00</td><td>0</td><td>-</td><td><a>edit balance</a> | <a>add vouchers</a></td></tr>
<tr class="even"><td class="c0"><svg class="uic" viewBox="0 0 18 18"><ellipse cx="9" cy="17.100" rx="6.300" ry="0.900" fill="#000" opacity=".10"/><path fill="url(#ug)" d="M9 2.050a3.350 3.350 0 0 1 2.300 5.790C13.500 8.700 14.600 11 14.600 13.400c0 2.600-1.500 3.600-5.600 3.600S3.400 16 3.400 13.400c0-2.400 1.100-4.700 3.300-5.560A3.350 3.350 0 0 1 9 2.050z"/></svg></td><td class="c1">sysguate</td><td><svg class="xic" viewBox="0 0 18 18"><ellipse cx="9" cy="16.2" rx="6.500" ry="0.800" fill="#000" opacity=".09"/><path d="M3.950 3.650l10.100 10.700M14.050 3.650l-10.100 10.700" stroke="url(#xg)" stroke-width="4.300" stroke-linecap="round" fill="none"/></svg></td><td>$0.00</td><td>0</td><td>-</td><td><a>edit balance</a> | <a>add vouchers</a></td></tr>
<tr class="odd"><td class="c0"><svg class="uic" viewBox="0 0 18 18"><ellipse cx="9" cy="17.100" rx="6.300" ry="0.900" fill="#000" opacity=".10"/><path fill="url(#ug)" d="M9 2.050a3.350 3.350 0 0 1 2.300 5.790C13.500 8.700 14.600 11 14.600 13.400c0 2.600-1.500 3.600-5.600 3.600S3.400 16 3.400 13.400c0-2.400 1.100-4.700 3.300-5.560A3.350 3.350 0 0 1 9 2.050z"/></svg></td><td class="c1">nic333</td><td><svg class="xic" viewBox="0 0 18 18"><ellipse cx="9" cy="16.2" rx="6.500" ry="0.800" fill="#000" opacity=".09"/><path d="M3.950 3.650l10.100 10.700M14.050 3.650l-10.100 10.700" stroke="url(#xg)" stroke-width="4.300" stroke-linecap="round" fill="none"/></svg></td><td>$0.00</td><td>0</td><td>-</td><td><a>edit balance</a> | <a>add vouchers</a></td></tr>
<tr class="even"><td class="c0"><svg class="uic" viewBox="0 0 18 18"><ellipse cx="9" cy="17.100" rx="6.300" ry="0.900" fill="#000" opacity=".10"/><path fill="url(#ug)" d="M9 2.050a3.350 3.350 0 0 1 2.300 5.790C13.500 8.700 14.600 11 14.600 13.400c0 2.600-1.500 3.600-5.600 3.600S3.400 16 3.400 13.400c0-2.400 1.100-4.700 3.300-5.560A3.350 3.350 0 0 1 9 2.050z"/></svg></td><td class="c1">villabull</td><td><svg class="xic" viewBox="0 0 18 18"><ellipse cx="9" cy="16.2" rx="6.500" ry="0.800" fill="#000" opacity=".09"/><path d="M3.950 3.650l10.100 10.700M14.050 3.650l-10.100 10.700" stroke="url(#xg)" stroke-width="4.300" stroke-linecap="round" fill="none"/></svg></td><td>$0.00</td><td>0</td><td>-</td><td><a>edit balance</a> | <a>add vouchers</a></td></tr>
</tbody></table>
</div>
<div id="foot"><div class="l">Copyright © 2026 File Upload Script</div><div class="r">Created by <b>Yetishare</b>, a <b>MFScripts</b> company&nbsp; |&nbsp; <b>v5.6.0</b>&nbsp; |&nbsp; <b>Support</b></div></div>
</body></html>
